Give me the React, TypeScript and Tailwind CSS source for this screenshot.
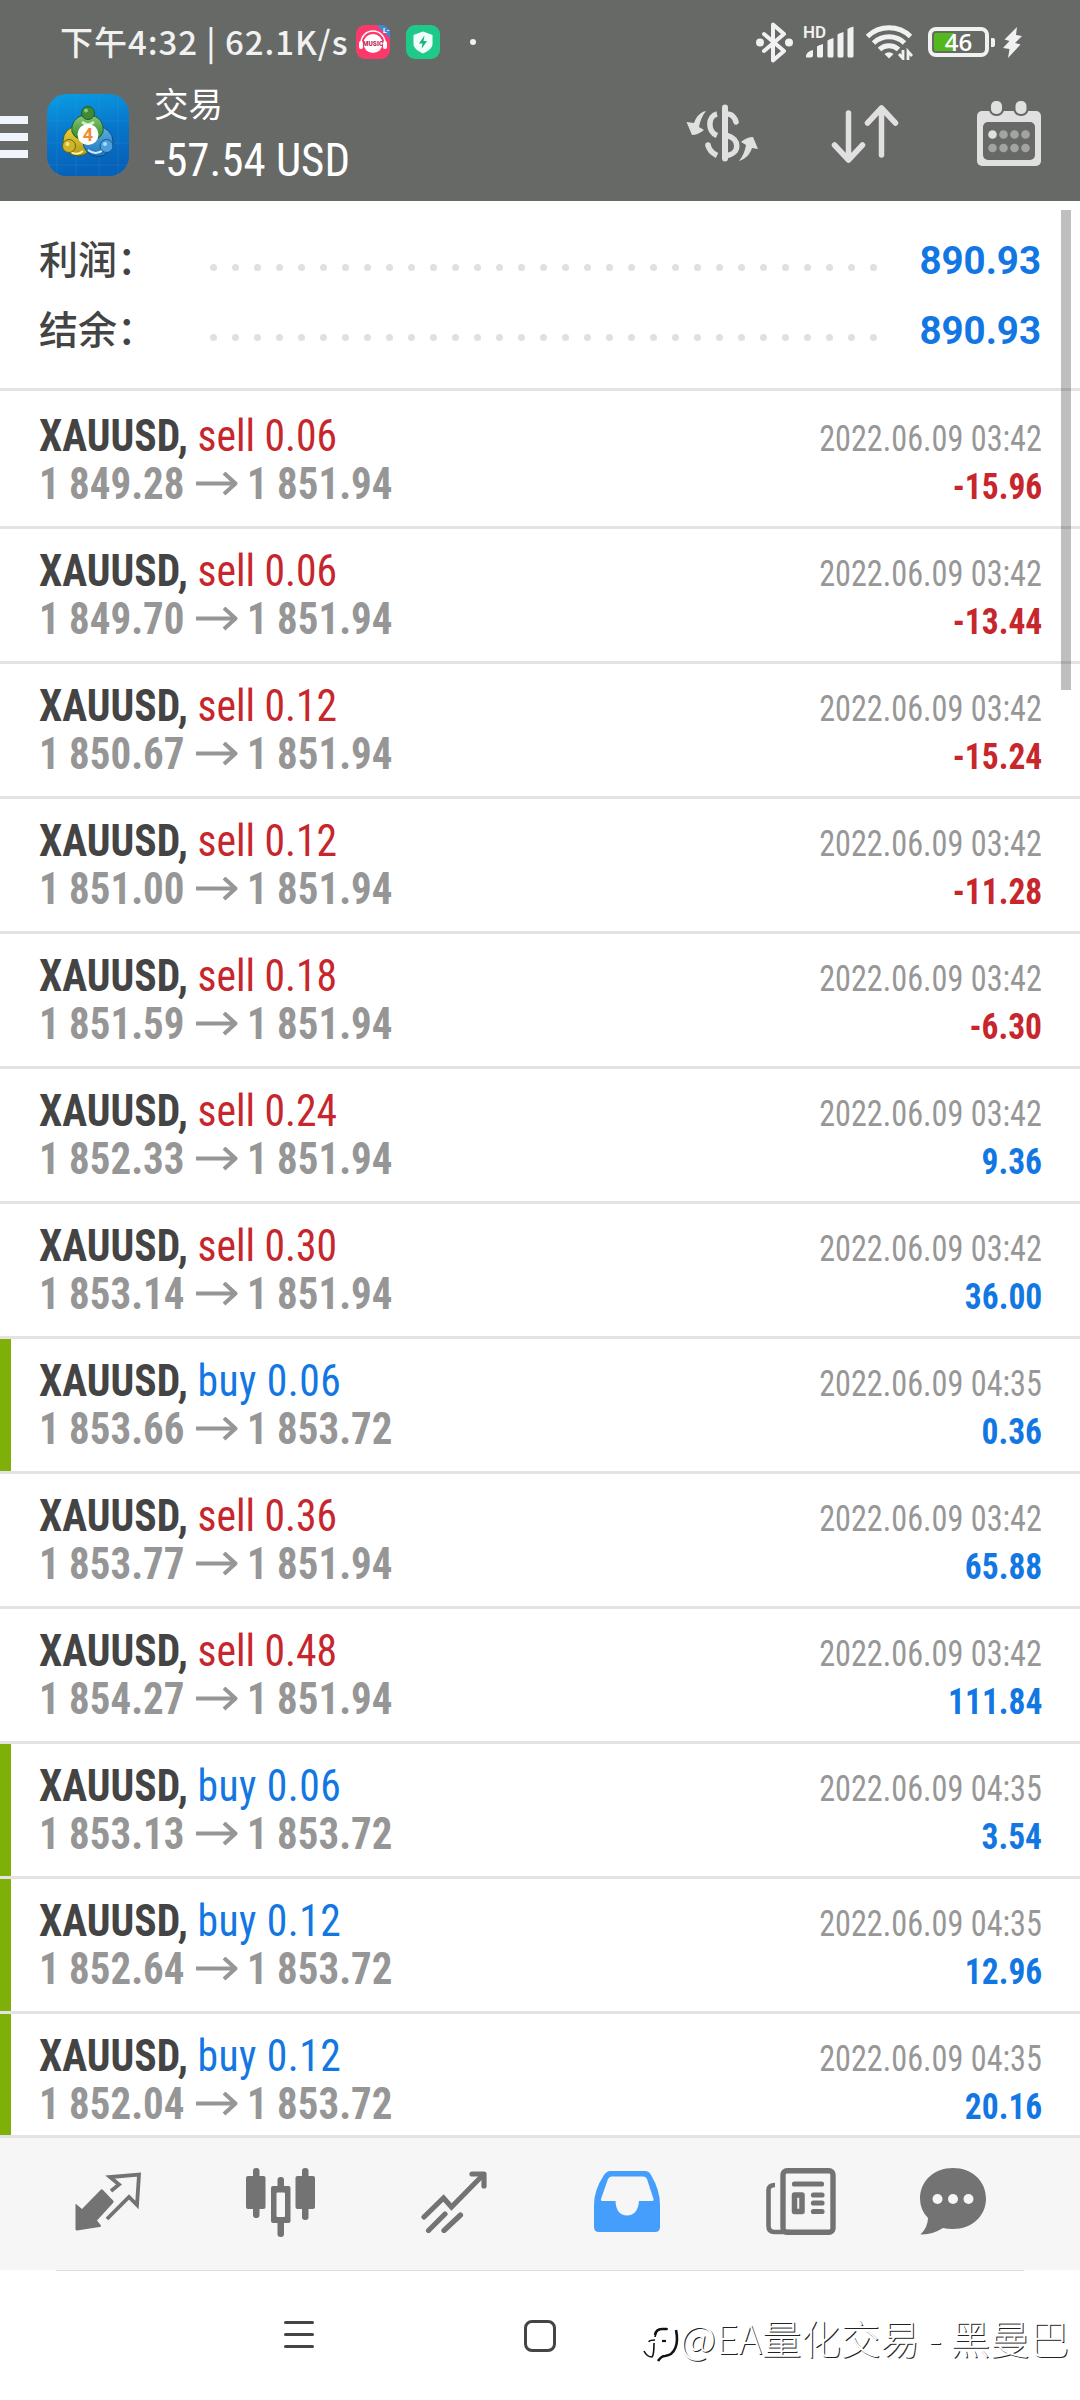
import type { ReactNode } from 'react';
import { clsx } from 'clsx';

type Order = {
  side: 'sell' | 'buy';
  volume: string;
  open: string;
  close: string;
  time: string;
  profit: string;
  marked?: boolean;
};

const SELL_TIME = '2022.06.09 03:42';
const BUY_TIME = '2022.06.09 04:35';

const orders: Order[] = [
  { side: 'sell', volume: '0.06', open: '1 849.28', close: '1 851.94', time: SELL_TIME, profit: '-15.96' },
  { side: 'sell', volume: '0.06', open: '1 849.70', close: '1 851.94', time: SELL_TIME, profit: '-13.44' },
  { side: 'sell', volume: '0.12', open: '1 850.67', close: '1 851.94', time: SELL_TIME, profit: '-15.24' },
  { side: 'sell', volume: '0.12', open: '1 851.00', close: '1 851.94', time: SELL_TIME, profit: '-11.28' },
  { side: 'sell', volume: '0.18', open: '1 851.59', close: '1 851.94', time: SELL_TIME, profit: '-6.30' },
  { side: 'sell', volume: '0.24', open: '1 852.33', close: '1 851.94', time: SELL_TIME, profit: '9.36' },
  { side: 'sell', volume: '0.30', open: '1 853.14', close: '1 851.94', time: SELL_TIME, profit: '36.00' },
  { side: 'buy', volume: '0.06', open: '1 853.66', close: '1 853.72', time: BUY_TIME, profit: '0.36', marked: true },
  { side: 'sell', volume: '0.36', open: '1 853.77', close: '1 851.94', time: SELL_TIME, profit: '65.88' },
  { side: 'sell', volume: '0.48', open: '1 854.27', close: '1 851.94', time: SELL_TIME, profit: '111.84' },
  { side: 'buy', volume: '0.06', open: '1 853.13', close: '1 853.72', time: BUY_TIME, profit: '3.54', marked: true },
  { side: 'buy', volume: '0.12', open: '1 852.64', close: '1 853.72', time: BUY_TIME, profit: '12.96', marked: true },
  { side: 'buy', volume: '0.12', open: '1 852.04', close: '1 853.72', time: BUY_TIME, profit: '20.16', marked: true },
];

const summary = [
  { label: '利润：', value: '890.93' },
  { label: '结余：', value: '890.93' },
];

function MusicIcon() {
  return (
    <svg width="34" height="34" viewBox="0 0 34 34" className="overflow-visible">
      <defs>
        <clipPath id="musicClip">
          <rect width="34" height="34" rx="9" />
        </clipPath>
      </defs>
      <g clipPath="url(#musicClip)">
        <rect width="34" height="34" fill="#fb3a6b" />
        <path d="M21 0h13v13z" fill="#2f8fe0" />
      </g>
      <text x="27" y="7.500" fontSize="7" fontWeight="700" fill="#fff" fontFamily="Roboto, sans-serif">L-</text>
      <circle cx="17" cy="18.500" r="9.500" fill="#fff" />
      <path d="M5 18a12 12 0 0 1 24 0" fill="none" stroke="#fff" strokeWidth="1.6" />
      <rect x="3" y="16" width="4" height="8" rx="2" fill="#fff" />
      <rect x="27" y="16" width="4" height="8" rx="2" fill="#fff" />
      <text x="17" y="21" fontSize="6.500" fontWeight="900" fill="#c22a5a" textAnchor="middle" fontFamily="Roboto, sans-serif">
        MUSIC
      </text>
    </svg>
  );
}

function ShieldIcon() {
  return (
    <svg width="34" height="34" viewBox="0 0 34 34">
      <rect width="34" height="34" rx="9" fill="#1fc98a" />
      <path d="M17 6.500l9.500 3.500v9c0 4-4 7-9.500 9.500C11.500 26 7.500 23 7.500 19v-9z" fill="#f1fffa" />
      <path d="M18.500 10.500l-5.500 8h3.500l-1 5.500 5.500-8h-3.500z" fill="#17b57c" />
    </svg>
  );
}

function BluetoothIcon() {
  return (
    <svg width="37" height="41" viewBox="0 0 37 41" fill="none" stroke="#f1f1f1" strokeWidth="4" strokeLinejoin="round" strokeLinecap="round">
      <path d="M8 12l20 17-11 9.500V2.500L28 12 8 29" />
      <circle cx="4" cy="20.500" r="2" fill="#f1f1f1" />
      <circle cx="33" cy="20.500" r="2" fill="#f1f1f1" />
    </svg>
  );
}

function SignalIcon() {
  return (
    <svg width="50" height="34" viewBox="0 0 50 34" fill="#f1f1f1" className="overflow-visible">
      <text x="-1" y="13" fontSize="17" fontWeight="600" fontFamily="Roboto, sans-serif">HD</text>
      <path d="M2 32q0-5.500 7-7v5.500q0 2-2 2H4q-2 0-2-.500z" />
      <path d="M13 21.500q1.500-1.500 6-2.500v12q0 1.500-1.500 1.500h-3q-1.500 0-1.500-1.500z" />
      <path d="M23.500 15.500q1.500-1.500 6-2.500v18q0 1.500-1.500 1.500h-3q-1.500 0-1.500-1.500z" />
      <path d="M33.500 9.500q1.500-1.500 6-2.500v24q0 1.500-1.500 1.500h-3q-1.500 0-1.500-1.500z" />
      <path d="M43.500 4q1.500-1.500 6-2.500V31q0 1.500-1.500 1.500h-3q-1.500 0-1.500-1.500z" />
    </svg>
  );
}

function WifiIcon() {
  return (
    <svg width="47" height="36" viewBox="0 0 47 36" fill="none" stroke="#f1f1f1" strokeWidth="5">
      <path d="M1.500 12.500a31 31 0 0 1 43 0" />
      <path d="M7.500 19a22.500 22.500 0 0 1 31 0" />
      <path d="M13.500 25.500a14 14 0 0 1 19 0" />
      <path d="M18.500 30a6.500 6.500 0 0 1 9 0l-4.500 4.500z" fill="#f1f1f1" stroke="none" />
      <path d="M37 26v8.500l-4-4.500M42 36v-8.500l4 4.500" strokeWidth="2.800" />
    </svg>
  );
}

function Battery() {
  return (
    <div className="flex items-center gap-[2px]">
      <div className="flex h-[30px] w-[61px] rounded-[8px] border-[4px] border-[#f1f1f1] p-[2px]">
        <div className="relative flex h-full w-full items-center justify-center">
          <div className="absolute inset-y-0 left-0 w-[21px] rounded-[2px] bg-[#52b81c]" />
          <span className="relative font-['Open_Sans',sans-serif] text-[24px] leading-none font-semibold text-white">46</span>
        </div>
      </div>
      <div className="h-[9px] w-[4px] rounded-r-[2px] bg-[#f1f1f1]" />
    </div>
  );
}

function BoltIcon() {
  return (
    <svg width="19" height="31" viewBox="0 0 19 31" fill="#f1f1f1">
      <path d="M14 0L1.500 12.500l5 1.500L0 21l6.500 1L5 31l12.500-13.500-5.500-1.500L19 9l-6-1z" />
    </svg>
  );
}

function AppLogo() {
  return (
    <svg width="82" height="82" viewBox="0 0 82 82">
      <defs>
        <linearGradient id="logoBg" x1="0" y1="0" x2="0.200" y2="1">
          <stop offset="0" stopColor="#0a9ee4" />
          <stop offset="0.500" stopColor="#0878cc" />
          <stop offset="1" stopColor="#0661b8" />
        </linearGradient>
        <linearGradient id="logoGreen" x1="0" y1="0" x2="0" y2="1">
          <stop offset="0" stopColor="#8cc878" />
          <stop offset="1" stopColor="#2c8a2c" />
        </linearGradient>
        <linearGradient id="logoYellow" x1="0" y1="0" x2="0" y2="1">
          <stop offset="0" stopColor="#ecd340" />
          <stop offset="1" stopColor="#b09a18" />
        </linearGradient>
        <linearGradient id="logoBlue" x1="0" y1="0" x2="0" y2="1">
          <stop offset="0" stopColor="#5cb0e6" />
          <stop offset="1" stopColor="#2076b8" />
        </linearGradient>
      </defs>
      <rect width="82" height="82" rx="20" fill="url(#logoBg)" />
      <path d="M10 0v82M29 0v82M52 0v82M71 0v82M0 27h82M0 49h82M0 71h82" stroke="#3aa6ea" strokeOpacity="0.200" />
      <circle cx="31" cy="47" r="15" fill="url(#logoYellow)" stroke="#4c5a20" />
      <circle cx="51" cy="47.500" r="15" fill="url(#logoBlue)" stroke="#0b4a80" />
      <path d="M25 38c-3-23 34-23 31 0q-2 5-6 7H32q-5-2-7-7z" fill="url(#logoGreen)" stroke="#1c5c2a" />
      <path d="M41 56q8 6 15 0" fill="none" stroke="#cfeaff" strokeWidth="2" />
      <path d="M24 58q6 4 12-1" fill="none" stroke="#fff3a0" strokeWidth="2" />
      <path d="M35 28q6 5 12 0" fill="none" stroke="#d6f0c4" strokeWidth="2.500" />
      <circle cx="41" cy="19" r="6.500" fill="#3f8a34" stroke="#1c5c2a" />
      <circle cx="39" cy="16.500" r="2" fill="#8cc878" />
      <circle cx="22" cy="52" r="6.500" fill="#d0b428" stroke="#6a6418" />
      <circle cx="20.500" cy="50" r="2" fill="#f6e680" />
      <circle cx="59.500" cy="52" r="6.500" fill="#4aa0dc" stroke="#14588c" />
      <circle cx="58" cy="50" r="2" fill="#a8dcf8" />
      <circle cx="41" cy="40.500" r="10.500" fill="#fff" />
      <text x="41" y="47" fontSize="18" fontWeight="700" fill="#f08a34" textAnchor="middle" fontFamily="Roboto, sans-serif">
        4
      </text>
    </svg>
  );
}

function ExchangeIcon() {
  return (
    <svg width="73" height="58" viewBox="0 0 73 58" fill="none" stroke="#e0e0e0">
      <path d="M39 3.500v51" strokeWidth="6" strokeLinecap="round" />
      <path d="M31 10c-9 2-10 17 0 21.500" strokeWidth="5.500" />
      <path d="M22 41c1 5 4 8 9 10.500" strokeWidth="5.500" />
      <circle cx="22" cy="41" r="2.750" fill="#e0e0e0" stroke="none" />
      <path d="M41 10c5 0 8 4 9 8" strokeWidth="5.500" strokeLinecap="round" />
      <path d="M41 31.500c13 3 13 18 0 20" strokeWidth="5.500" />
      <path d="M20 7c-6 1-10 6-12 12l-7.500-1L6 31q6 0 12-5l-5-3c1-6 3-11 7-16z" fill="#e0e0e0" stroke="none" />
      <path d="M53 57c7-2 11-7 13-13l6 1-5-12q-6 0-12 5l5 3c-1 6-3 11-7 16z" fill="#e0e0e0" stroke="none" />
    </svg>
  );
}

function SortIcon() {
  return (
    <svg width="68" height="60" viewBox="0 0 68 60" fill="none" stroke="#e0e0e0" strokeWidth="5.500" strokeLinecap="round" strokeLinejoin="round">
      <path d="M17.500 9v47M3.500 41l14 15 14-15" />
      <path d="M50.500 51V4M36.500 19l14-15 14 15" />
    </svg>
  );
}

function CalendarIcon() {
  return (
    <svg width="64" height="66" viewBox="0 0 64 66">
      <rect x="0" y="11" width="64" height="55" rx="5" fill="#e0e0e0" />
      <rect x="6" y="22" width="52" height="38" rx="5" fill="#676966" />
      <rect x="12" y="-2" width="15" height="18" rx="7" fill="#676966" />
      <rect x="36.500" y="-2" width="15" height="18" rx="7" fill="#676966" />
      <rect x="14" y="1" width="11" height="13" rx="5" fill="#e0e0e0" />
      <rect x="38.500" y="1" width="11" height="13" rx="5" fill="#e0e0e0" />
      {[15.5, 26.5, 37.5, 48.5].map((cx, i) => (
        <g key={cx} fill="#a3a4a2">
          <circle cx={cx} cy="34.500" r="4.300" fill={i === 0 ? '#e0e0e0' : '#a3a4a2'} />
          <circle cx={cx} cy="48" r="4.300" />
        </g>
      ))}
    </svg>
  );
}

function QuotesIcon() {
  return (
    <svg width="68" height="60" viewBox="0 0 68 60">
      <path d="M1 32l6 5L26 17.500q1-.500 2 .500l10.500 11q.500 1-.500 2L22 48.500l4 5q0 1.500-1.500 1.500L2 58.500q-1.500 0-1.500-1.500V32z" fill="#737373" />
      <path d="M36 19l8-6.500L35 5l29-2.500L62 33l-8-8-22 22" fill="none" stroke="#737373" strokeWidth="3.800" />
    </svg>
  );
}

function CandlesIcon() {
  return (
    <svg width="70" height="69" viewBox="0 0 70 69" fill="#737373">
      <rect x="7" y="0" width="6.500" height="50" rx="3" />
      <rect x="0" y="8" width="19.500" height="33" rx="2" />
      <rect x="56" y="0" width="6.500" height="52" rx="3" />
      <rect x="49.500" y="8" width="19.500" height="33" rx="2" />
      <rect x="31.500" y="9" width="6.500" height="60" rx="3" />
      <rect x="25" y="18" width="19.500" height="37" rx="2" />
      <rect x="30.500" y="24.500" width="8.500" height="24.500" rx="1" fill="#f6f6f6" />
    </svg>
  );
}

function TrendIcon() {
  return (
    <svg width="67" height="62" viewBox="0 0 67 62" fill="none" stroke="#737373" strokeWidth="5.200" strokeLinecap="round">
      <path d="M3 46L22.500 27l8 9L62 4" />
      <path d="M51 3h12v12" strokeLinejoin="round" />
      <path d="M7.500 59.500L24 43M23 59.500L39.500 44" />
    </svg>
  );
}

function InboxIcon() {
  return (
    <svg width="67" height="61" viewBox="0 0 67 61">
      <path d="M10 4q3-4 6-4h35q4 0 6 4 9 15 9 30v22q0 5-5 5H5q-5 0-5-5V34Q0 19 10 4z" fill="#459dfc" />
      <path d="M14 8q1-2.500 3.500-2.500h32Q52 5.500 53 8l6.500 20q.500 2-2 2H45q-1 14-12 14.500Q22 44 21.500 30H9q-2.500 0-2-2z" fill="#f6f6f6" />
    </svg>
  );
}

function NewsIcon() {
  return (
    <svg width="70" height="67" viewBox="0 0 70 67" fill="none" stroke="#737373">
      <rect x="17" y="2.700" width="50" height="61.500" rx="4" strokeWidth="5.400" />
      <path d="M9 17q-6.500 0-6.500 5v36q0 6 6 6H24" strokeWidth="4.600" />
      <path d="M28.500 16h27M47.500 27h8.500M47.500 35h8.500M47.500 43.500h8.500" strokeWidth="5.200" strokeLinecap="round" />
      <rect x="28.500" y="27" width="7.500" height="16.500" strokeWidth="5.500" strokeLinejoin="round" />
    </svg>
  );
}

function ChatIcon() {
  return (
    <svg width="67" height="67" viewBox="0 0 67 67">
      <path d="M33 0c19 0 33 13 33 30.500S52 61 33 61q-6 0-10-1Q12 67 .500 66.500 8 59 8 50 0 42 0 30.500C0 13 14 0 33 0z" fill="#737373" />
      <circle cx="17.500" cy="31" r="5" fill="#f6f6f6" />
      <circle cx="33" cy="31" r="5" fill="#f6f6f6" />
      <circle cx="48.500" cy="31" r="5" fill="#f6f6f6" />
    </svg>
  );
}

function LongArrow() {
  return (
    <svg width="42" height="24" viewBox="0 0 42 24" fill="none" stroke="#969696" strokeWidth="4">
      <path d="M0 11.500h40M28 1l11.500 10.500L28 22" strokeLinejoin="round" />
    </svg>
  );
}

function StatusBar() {
  return (
    <div className="flex h-[84px] items-center pl-[60px]">
      <span className="-mt-[2px] w-[290px] font-['Noto_Sans_CJK_SC',sans-serif] text-[33px] leading-none font-medium tracking-[0.95px] whitespace-nowrap text-[#f1f1f1]">
        下午4:32 | 62.1K/s
      </span>
      <div className="ml-[6px] flex items-center gap-[16px]">
        <MusicIcon />
        <ShieldIcon />
      </div>
      <div className="ml-[30px] h-[6px] w-[6px] rounded-full bg-[#f1f1f1]" />
      <div className="ml-auto flex items-center pr-[58px]">
        <BluetoothIcon />
        <div className="ml-[11px]">
          <SignalIcon />
        </div>
        <div className="ml-[12px]">
          <WifiIcon />
        </div>
        <div className="ml-[15px]">
          <Battery />
        </div>
        <div className="ml-[8px]">
          <BoltIcon />
        </div>
      </div>
    </div>
  );
}

function AppBar() {
  return (
    <div className="flex h-[117px]">
      <div className="mt-[32px] flex w-[28px] flex-col gap-[9px]">
        <div className="h-[8px] bg-[#eff4fd]" />
        <div className="h-[8px] bg-[#eff4fd]" />
        <div className="h-[8px] bg-[#eff4fd]" />
      </div>
      <div className="mt-[10px] ml-[19px]">
        <AppLogo />
      </div>
      <div className="ml-[25px] text-white">
        <div className="-mt-[2px] font-['Noto_Sans_CJK_SC',sans-serif] text-[34.5px] leading-[40px]">交易</div>
        <div className="mt-[2px] origin-left scale-x-[0.955] font-[Roboto,sans-serif] text-[47px] leading-[72px] whitespace-nowrap [font-stretch:75%]">
          -57.54 USD
        </div>
      </div>
      <div className="mt-[16px] ml-auto flex items-start pr-[39px]">
        <div className="mt-[4px]">
          <ExchangeIcon />
        </div>
        <div className="mt-[4px] ml-[72px]">
          <SortIcon />
        </div>
        <div className="ml-[78px]">
          <CalendarIcon />
        </div>
      </div>
    </div>
  );
}

function SummaryRow({ label, value }: { label: string; value: string }) {
  return (
    <div className="flex h-[70px] items-center pr-[39px] pl-[39px]">
      <span className="-mt-[5px] w-[171px] font-['Noto_Sans_CJK_SC',sans-serif] text-[39px] leading-none font-medium text-[#444]">{label}</span>
      <div className="mt-[14px] flex gap-[15px]">
        {Array.from({ length: 31 }, (_, i) => (
          <div key={i} className="h-[7px] w-[7px] rounded-full bg-[#e0e0e0]" />
        ))}
      </div>
      <span className="mt-[2px] ml-auto font-[Roboto,sans-serif] text-[38.5px] leading-none font-bold text-[#1277e2]">{value}</span>
    </div>
  );
}

function OrderRow({ order }: { order: Order }) {
  const loss = order.profit.startsWith('-');

  return (
    <div className="flex h-[135px] shrink-0 border-t-[3px] border-[#e3e3e3] bg-white font-[Roboto,sans-serif] [font-stretch:75%] first:border-white">
      <div className={clsx('w-[11px]', order.marked && 'bg-[#7fb009]')} />
      <div className="flex-1 pt-[18px] pr-[38px] pl-[28px]">
        <div className="flex h-[48px] items-baseline justify-between leading-[48px] whitespace-nowrap">
          <div className="origin-left scale-x-[0.945] text-[44px]">
            <span className="font-bold text-[#444]">XAUUSD, </span>
            <span className={order.side === 'sell' ? 'text-[#c6262c]' : 'tracking-[0.5px] text-[#1277e2]'}>
              {order.side} {order.volume}
            </span>
          </div>
          <span className="origin-right scale-x-[0.895] text-[36px] text-[#979797]">{order.time}</span>
        </div>
        <div className="flex h-[48px] items-baseline justify-between leading-[48px] font-bold whitespace-nowrap">
          <div className="flex items-center text-[44px] text-[#969696]">
            <span className="w-[157px] origin-left scale-x-[0.93]">{order.open}</span>
            <LongArrow />
            <span className="ml-[9px] origin-left scale-x-[0.93]">{order.close}</span>
          </div>
          <span className={clsx('origin-right scale-x-[0.93] text-[36px]', loss ? 'text-[#c6262c]' : 'text-[#1277e2]')}>
            {order.profit}
          </span>
        </div>
      </div>
    </div>
  );
}

function Tab({ className, children }: { className: string; children: ReactNode }) {
  return <div className={clsx('flex items-center', className)}>{children}</div>;
}

export default function App() {
  return (
    <div className="flex h-[2400px] w-[1080px] flex-col overflow-hidden bg-white">
      <header className="h-[201px] shrink-0 bg-[#676966]">
        <StatusBar />
        <AppBar />
      </header>

      <main className="relative flex h-[1934px] shrink-0 flex-col overflow-hidden">
        <section className="h-[190px] shrink-0 border-b-[3px] border-[#e3e3e3] pt-[24px]">
          {summary.map((row) => (
            <SummaryRow key={row.label} {...row} />
          ))}
        </section>
        <div className="flex flex-col">
          {orders.map((order) => (
            <OrderRow key={order.open} order={order} />
          ))}
        </div>
        {/* scroll thumb */}
        <div className="absolute top-[9px] right-[9px] h-[480px] w-[10px] bg-black/25" />
      </main>

      <nav className="flex h-[135px] shrink-0 items-start border-t-[3px] border-[#e3e3e3] bg-[#f6f6f6] pt-[30px] pl-[75px]">
        <Tab className="mt-[4px] w-[171px]"><QuotesIcon /></Tab>
        <Tab className="w-[175px]"><CandlesIcon /></Tab>
        <Tab className="mt-[3px] w-[173px]"><TrendIcon /></Tab>
        <Tab className="mt-[3px] w-[172px]"><InboxIcon /></Tab>
        <Tab className="w-[154px]"><NewsIcon /></Tab>
        <Tab className="w-[67px]"><ChatIcon /></Tab>
      </nav>
      <div className="mx-[56px] h-px shrink-0 bg-[#dedede]" />

      <footer className="flex flex-1 items-start pt-[49px] pl-[284px]">
        <div className="mt-[1px] flex w-[30px] flex-col gap-[9px]">
          <div className="h-[3px] rounded-full bg-[#444]" />
          <div className="h-[3px] rounded-full bg-[#444]" />
          <div className="h-[3px] rounded-full bg-[#444]" />
        </div>
        <div className="ml-[210px] h-[32px] w-[32px] rounded-[8px] border-[3px] border-[#444]" />
        <div className="-mt-[9px] ml-[86px] flex items-center">
          <svg width="38" height="42" viewBox="0 0 38 42" fill="none" stroke="#111" className="mt-[10px]">
            <path d="M26 8h-6q-6 0-7 8M7 21q0-2 6-2M12 22q0 12-2 14-5 0-8-6" strokeWidth="1.600" />
            <path d="M13 14q1-6 7-6h5" strokeWidth="2.600" />
            <path d="M20 20h4" strokeWidth="2.200" />
            <path d="M34 9c3 14-1 25-11 26-3 0-5 2-7 5" strokeWidth="2.600" />
          </svg>
          <span className="font-['Noto_Sans_CJK_SC',sans-serif] text-[39.5px] leading-[42px] font-light whitespace-nowrap text-white [text-shadow:1px_1px_0_#222]">
            @EA量化交易 - 黑曼巴
          </span>
        </div>
      </footer>
    </div>
  );
}
